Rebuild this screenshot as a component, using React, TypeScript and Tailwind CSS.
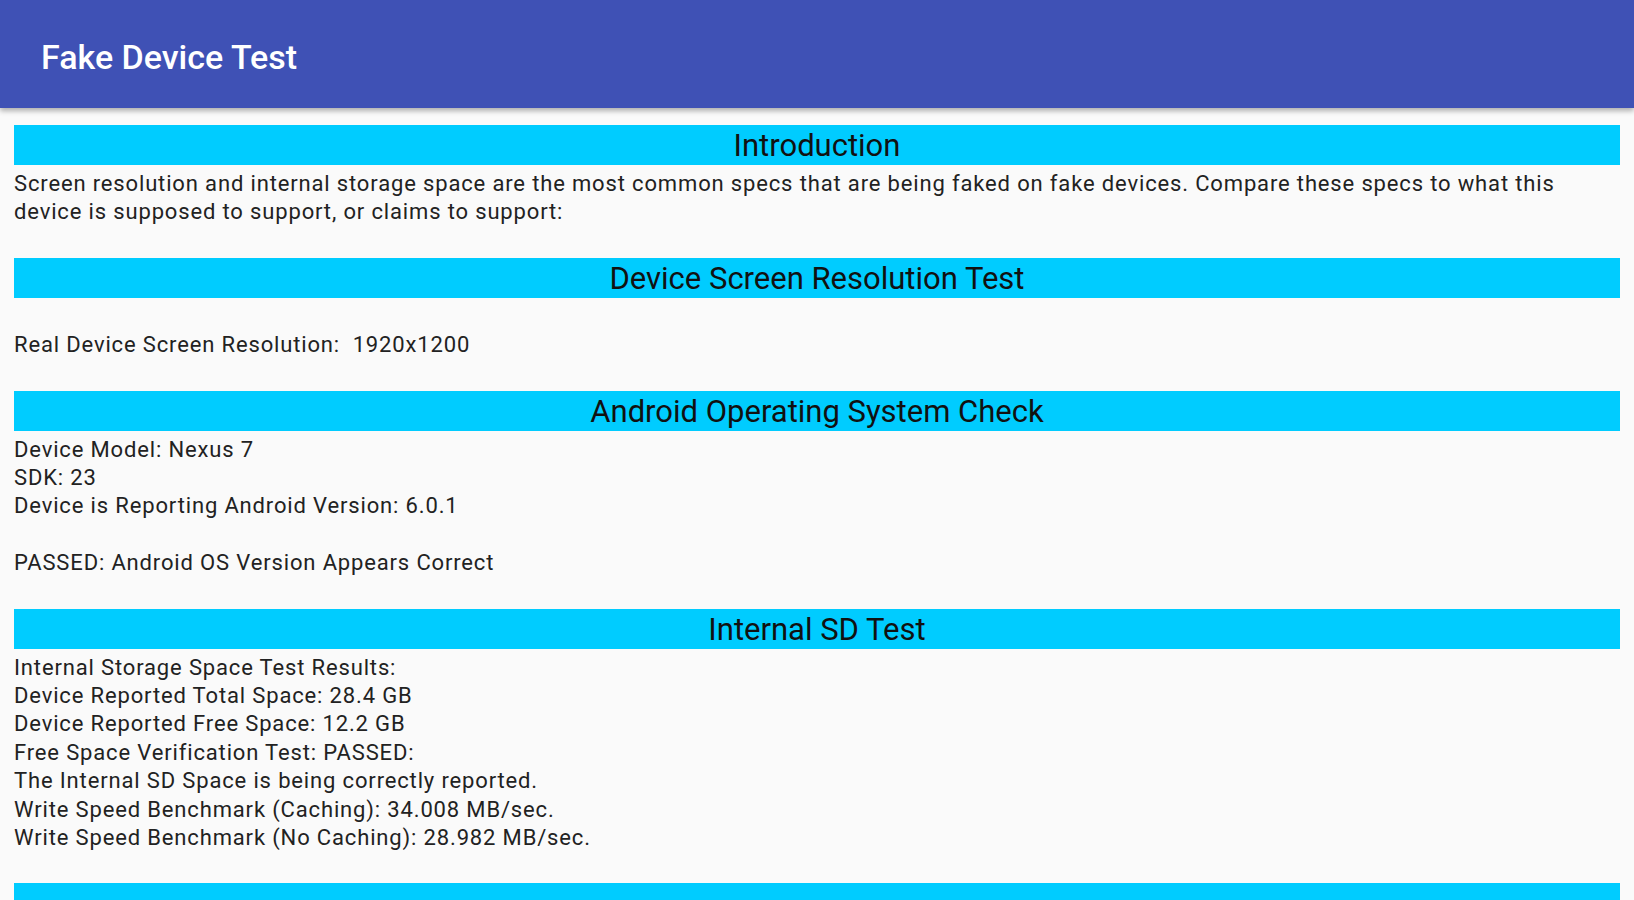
export default function App() {
  const sections: { title: string; lines: string[] }[] = [
    {
      title: "Introduction",
      lines: [
        "Screen resolution and internal storage space are the most common specs that are being faked on fake devices. Compare these specs to what this",
        "device is supposed to support, or claims to support:",
      ],
    },
    {
      title: "Device Screen Resolution Test",
      lines: ["", "Real Device Screen Resolution:\u00a0\u00a01920x1200"],
    },
    {
      title: "Android Operating System Check",
      lines: [
        "Device Model: Nexus 7",
        "SDK: 23",
        "Device is Reporting Android Version: 6.0.1",
        "",
        "PASSED: Android OS Version Appears Correct",
      ],
    },
    {
      title: "Internal SD Test",
      lines: [
        "Internal Storage Space Test Results:",
        "Device Reported Total Space: 28.4 GB",
        "Device Reported Free Space: 12.2 GB",
        "Free Space Verification Test: PASSED:",
        "The Internal SD Space is being correctly reported.",
        "Write Speed Benchmark (Caching): 34.008 MB/sec.",
        "Write Speed Benchmark (No Caching): 28.982 MB/sec.",
      ],
    },
    { title: "", lines: [] },
  ];

  return (
    <div
      className="h-[900px] overflow-hidden bg-[#fafafa] text-[#222]"
      style={{ fontFamily: "Roboto, 'Noto Sans', sans-serif" }}
    >
      {/* toolbar */}
      <div className="relative z-10 flex h-[108px] items-center bg-[#3f51b5] pl-[41px] pt-[6px] shadow-[0_3px_5px_rgba(0,0,0,0.3)]">
        <h1 className="text-[34px] font-medium text-white">Fake Device Test</h1>
      </div>

      <div className="px-[14px] pt-[17px]">
        {sections.map((s, i) => (
          <div key={i} className="mb-[31px]">
            <div className="flex h-[40px] items-center justify-center bg-[#00ccff] pt-[3px] text-[31px] text-[#111]">
              {s.title}
            </div>
            <div className="mt-[5px] whitespace-nowrap text-[22px] leading-[28.4px] tracking-[0.85px]">
              {s.lines.map((l, j) => (
                <div key={j} className="min-h-[28.4px]">
                  {l}
                </div>
              ))}
            </div>
          </div>
        ))}
      </div>
    </div>
  );
}
